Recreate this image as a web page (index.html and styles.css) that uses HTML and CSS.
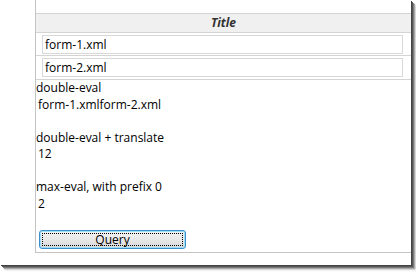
FILE: index.html
```html
<!DOCTYPE html>
<html lang="en">
<head>
  <meta charset="UTF-8">
  <title>Query form</title>
  <link rel="stylesheet" href="styles.css">
</head>
<body>
  <div class="shot">
    <div class="panel">
      <div class="grid">
        <div class="grid-head">Title</div>
        <div class="grid-row"><div class="cell-input">form-1.xml</div></div>
        <div class="grid-row"><div class="cell-input">form-2.xml</div></div>
      </div>

      <div class="results">
        <div class="label">double-eval</div>
        <div class="value">form-1.xmlform-2.xml</div>
        <div class="blank"></div>
        <div class="label">double-eval + translate</div>
        <div class="value">12</div>
        <div class="blank"></div>
        <div class="label">max-eval, with prefix 0</div>
        <div class="value">2</div>
      </div>

      <button class="query-btn" type="button"><span>Query</span></button>
    </div>
  </div>
</body>
</html>
```

FILE: styles.css
```css
html, body {
  height: 272px;
  overflow: hidden;
}
body {
  margin: 0;
  background: #fff;
  font-family: "Open Sans", "Noto Sans", sans-serif;
  font-size: 12px;
  color: #000;
}
.shot {
  width: 376px;
  height: 265px;
  padding-left: 35px;
  background: #fff;
  box-shadow: 1px 1px 0 #444, 2px 2px 0 #555, 3px 3px 0 #7a7a7a, 4px 4px 1px #a8a8a8, 5px 5px 2px #d4d4d4;
}
.panel {
  height: 239px;
  padding-top: 13px;
  border-left: 1px solid #c4c4c4;
  border-bottom: 1px solid #c4c4c4;
}
.grid {
  border-top: 1px solid #d4d4d4;
}
.grid-head {
  height: 18px;
  line-height: 18px;
  background: #f0f0f0;
  border-bottom: 1px solid #d4d4d4;
  text-align: center;
  font-weight: bold;
  font-style: italic;
  color: #333;
}
.grid-row {
  height: 23px;
  border-bottom: 1px solid #d4d4d4;
  padding: 2px 8px 0 6px;
  box-sizing: border-box;
}
.grid-row + .grid-row {
  height: 24px;
}
.cell-input {
  height: 17px;
  line-height: 17px;
  border: 1px solid #d8d8d8;
  padding-left: 2px;
}
.results {
  line-height: 16.5px;
}
.value {
  padding-left: 2px;
}
.blank {
  height: 16.5px;
}
.query-btn {
  display: block;
  margin: 18px 0 0 3px;
  width: 147px;
  height: 19px;
  padding: 2px;
  border: 1px solid #3c8fc8;
  border-radius: 3px;
  background: linear-gradient(#f4f4f4, #e8e8e8 50%, #d8d8d8);
  box-shadow: inset 0 0 0 1px #9ee0fa;
  font: inherit;
  color: #000;
}
.query-btn span {
  display: block;
  height: 11px;
  line-height: 12px;
  border: 1px dotted #000;
}
```
